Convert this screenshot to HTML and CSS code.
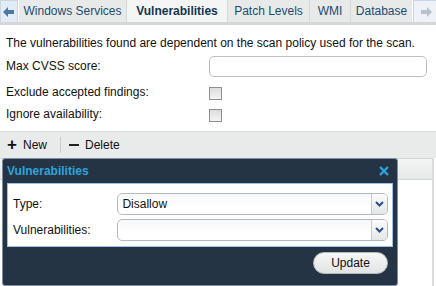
FILE: index.html
```html
<!DOCTYPE html>
<html lang="en">
<head>
    <meta charset="UTF-8">
    <title>Vulnerabilities</title>
    <link rel="stylesheet" href="styles.css">
</head>
<body>
    <div class="tabbar">
        <div class="tab-arrow left">
            <svg width="12" height="10" viewBox="0 0 12 10"><path d="M0 5 L5 0 L5 3 L11 3 L11 7 L5 7 L5 10 Z" fill="#4a78a8"/></svg>
        </div>
        <div class="tab t-win">Windows Services</div>
        <div class="tab t-vuln active">Vulnerabilities</div>
        <div class="tab t-patch">Patch Levels</div>
        <div class="tab t-wmi">WMI</div>
        <div class="tab t-db">Database</div>
        <div class="tab-arrow right">
            <svg width="12" height="10" viewBox="0 0 12 10"><path d="M12 5 L7 0 L7 3 L1 3 L1 7 L7 7 L7 10 Z" fill="#b4c2d0"/></svg>
        </div>
    </div>

    <div class="form">
        <p class="intro">The vulnerabilities found are dependent on the scan policy used for the scan.</p>
        <div class="row first">
            <label>Max CVSS score:</label>
            <input type="text" class="field">
        </div>
        <div class="row">
            <label>Exclude accepted findings:</label>
            <span class="check"></span>
        </div>
        <div class="row">
            <label>Ignore availability:</label>
            <span class="check"></span>
        </div>
    </div>

    <div class="toolbar">
        <span class="tool"><span class="plus">+</span> New</span>
        <span class="sep"></span>
        <span class="tool"><span class="minus"></span> Delete</span>
    </div>

    <div class="grid">
        <div class="grid-head"></div>

        <div class="dialog">
            <div class="dialog-title">
                <span>Vulnerabilities</span>
                <svg class="close" width="10" height="10" viewBox="0 0 10 10"><path d="M1 1 L9 9 M9 1 L1 9" stroke="#2ea3dc" stroke-width="2.4"/></svg>
            </div>
            <div class="dialog-body">
                <div class="drow">
                    <label>Type:</label>
                    <div class="select"><span>Disallow</span><span class="drop"><svg width="9" height="6" viewBox="0 0 9 6"><path d="M1 1 L4.5 4.5 L8 1" stroke="#2c4f8c" stroke-width="2" fill="none"/></svg></span></div>
                </div>
                <div class="drow">
                    <label>Vulnerabilities:</label>
                    <div class="select"><span></span><span class="drop"><svg width="9" height="6" viewBox="0 0 9 6"><path d="M1 1 L4.5 4.5 L8 1" stroke="#2c4f8c" stroke-width="2" fill="none"/></svg></span></div>
                </div>
            </div>
            <div class="dialog-foot">
                <button>Update</button>
            </div>
        </div>
    </div>
</body>
</html>
```
FILE: styles.css
```css
* {
    margin: 0;
    padding: 0;
    box-sizing: border-box;
}

body {
    font-family: "Liberation Sans", Arial, sans-serif;
    font-size: 12px;
    color: #111;
    background: #fff;
    width: 436px;
    height: 286px;
    overflow: hidden;
}

/* Tabs */
.tabbar {
    display: flex;
    height: 25px;
    border-bottom: 3px solid #d4d6d7;
    background: #fff;
    white-space: nowrap;
}

.tab-arrow {
    flex-shrink: 0;
    width: 18px;
    display: flex;
    align-items: center;
    justify-content: center;
    background: #e3ecf5;
    border: 1px solid #c9d6e3;
    border-bottom: none;
}

.tab-arrow.right {
    width: 25px;
    background: #eef2f6;
    margin-left: 1px;
}

.tab {
    flex-shrink: 0;
    background: #e8eaea;
    color: #1c4a6e;
    display: flex;
    align-items: center;
    justify-content: center;
    border-left: 1px solid #d6d8d9;
}

.t-win { width: 107px; border-left: none; margin-left: 1px; }
.t-vuln { width: 101px; }
.t-patch { width: 82px; }
.t-wmi { width: 41px; }
.t-db { width: 62px; }

.tab.active {
    background: #f4f5f5;
    font-weight: bold;
    color: #15364f;
}

/* Form */
.form {
    padding: 10px 6px 0 6px;
}

.intro {
    line-height: 16px;
    height: 20px;
}

.row {
    display: flex;
    align-items: center;
    height: 22px;
}

.row.first {
    height: 22px;
    margin-bottom: 4px;
}

.row label {
    width: 203px;
}

.field {
    width: 218px;
    height: 21px;
    border: 1px solid #b8bec4;
    border-radius: 5px;
    background: #fff;
}

.check {
    width: 13px;
    height: 13px;
    border: 1px solid #8f8f8f;
    background: linear-gradient(#dcdcdc, #f4f4f4);
    margin-top: 2px;
}

/* Toolbar */
.toolbar {
    margin-top: 6px;
    height: 27px;
    background: #e9eaea;
    border-top: 1px solid #d8dadb;
    display: flex;
    align-items: center;
    padding-left: 7px;
}

.tool {
    display: flex;
    align-items: center;
    gap: 6px;
    color: #111;
}

.plus {
    font-size: 17px;
    font-weight: bold;
    line-height: 12px;
    width: 10px;
}

.minus {
    display: inline-block;
    width: 10px;
    height: 2px;
    background: #222;
}

.sep {
    width: 1px;
    height: 16px;
    background: #c9cbcc;
    margin: 0 8px 0 13px;
}

/* Grid behind dialog */
.grid {
    position: relative;
    height: 129px;
    border-right: 2px solid #d9dbdc;
    width: 434px;
}

.grid-head {
    height: 22px;
    background: linear-gradient(#f4f5f5, #e6e7e7);
    border-top: 1px solid #d3d5d6;
    border-bottom: 1px solid #d3d5d6;
}

/* Dialog */
.dialog {
    position: absolute;
    left: 2px;
    top: 0;
    width: 396px;
    height: 128px;
    background: #243444;
    border: 1px solid #7e8ea0;
    border-radius: 3px;
    padding: 0 4px;
}

.dialog-title {
    height: 24px;
    display: flex;
    align-items: center;
    justify-content: space-between;
    color: #2ea3dc;
    font-weight: bold;
    font-size: 12px;
    padding: 0 4px 0 0;
}

.dialog-body {
    background: #fff;
    border: 1px solid #9cc3e6;
    height: 64px;
    padding: 7px 4px 0 5px;
}

.drow {
    display: flex;
    align-items: center;
    height: 26px;
}

.drow label {
    width: 105px;
}

.select {
    width: 272px;
    height: 22px;
    border: 1px solid #b4bac0;
    border-radius: 5px;
    background: linear-gradient(#f6f7f7, #fff 60%);
    display: flex;
    align-items: center;
    justify-content: space-between;
    padding-left: 4px;
    overflow: hidden;
}

.drop {
    width: 16px;
    height: 100%;
    border-left: 1px solid #c5cacf;
    background: linear-gradient(#fbfbfb, #e4e6e8);
    display: flex;
    align-items: center;
    justify-content: center;
}

.dialog-foot {
    display: flex;
    justify-content: flex-end;
    padding: 5px 5px 0 0;
}

.dialog-foot button {
    width: 75px;
    height: 22px;
    border: 1px solid #b6babd;
    border-radius: 11px;
    background: linear-gradient(#f7f7f7, #e2e3e3);
    font-family: "Liberation Sans", Arial, sans-serif;
    font-size: 12px;
    color: #111;
}
```
